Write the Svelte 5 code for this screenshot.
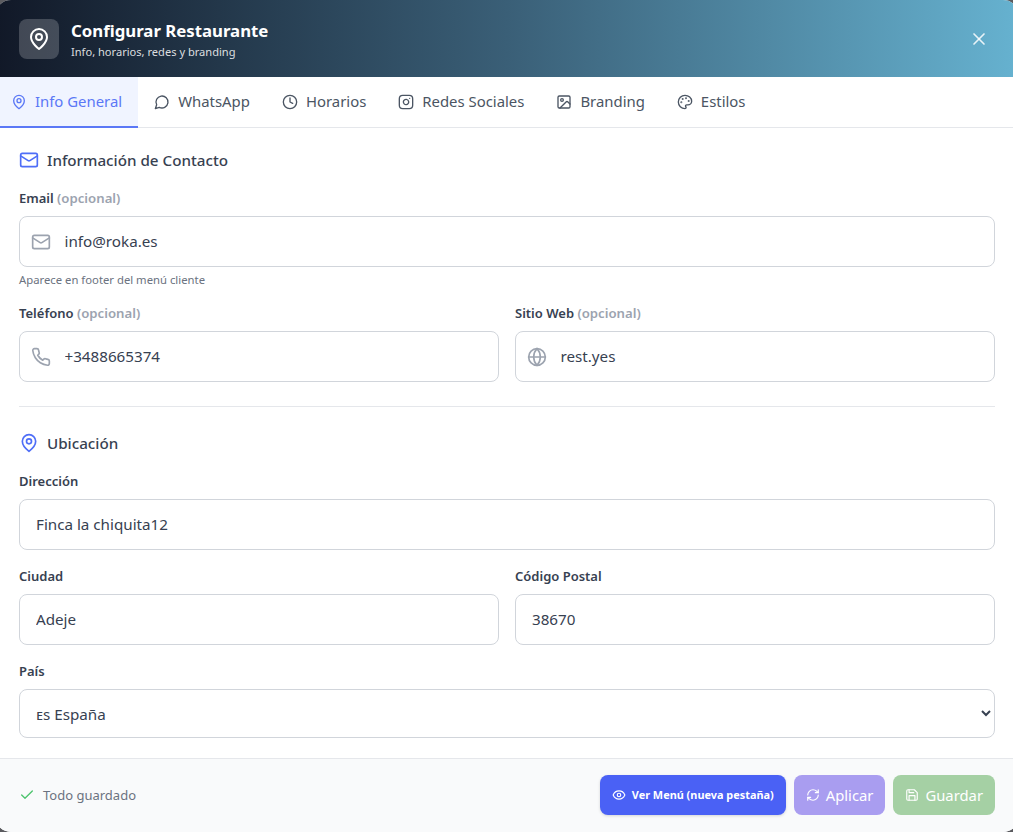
<script>
  const icons = {
    pin: '<path d="M20 10c0 6-8 12-8 12s-8-6-8-12a8 8 0 0 1 16 0Z"/><circle cx="12" cy="10" r="3"/>',
    chat: '<path d="M7.9 20A9 9 0 1 0 4 16.1L2 22Z"/>',
    clock: '<circle cx="12" cy="12" r="10"/><polyline points="12 6 12 12 16 14"/>',
    insta: '<rect x="2" y="2" width="20" height="20" rx="5"/><path d="M16 11.37A4 4 0 1 1 12.63 8 4 4 0 0 1 16 11.37z"/><line x1="17.5" y1="6.5" x2="17.51" y2="6.5"/>',
    image: '<rect x="3" y="3" width="18" height="18" rx="2"/><circle cx="9" cy="9" r="2"/><path d="m21 15-3.086-3.086a2 2 0 0 0-2.828 0L6 21"/>',
    palette: '<circle cx="13.5" cy="6.5" r=".5" fill="currentColor"/><circle cx="17.5" cy="10.5" r=".5" fill="currentColor"/><circle cx="8.5" cy="7.5" r=".5" fill="currentColor"/><circle cx="6.5" cy="12.5" r=".5" fill="currentColor"/><path d="M12 2C6.5 2 2 6.5 2 12s4.5 10 10 10c.926 0 1.648-.746 1.648-1.688 0-.437-.18-.835-.437-1.125-.29-.289-.438-.652-.438-1.125a1.64 1.64 0 0 1 1.668-1.668h1.996c3.051 0 5.555-2.503 5.555-5.554C21.965 6.012 17.461 2 12 2z"/>',
    mail: '<rect x="2" y="4" width="20" height="16" rx="2"/><path d="m22 7-8.97 5.7a1.94 1.94 0 0 1-2.06 0L2 7"/>',
    phone: '<path d="M22 16.92v3a2 2 0 0 1-2.18 2 19.79 19.79 0 0 1-8.63-3.07 19.5 19.5 0 0 1-6-6 19.79 19.79 0 0 1-3.07-8.67A2 2 0 0 1 4.11 2h3a2 2 0 0 1 2 1.72 12.84 12.84 0 0 0 .7 2.81 2 2 0 0 1-.45 2.11L8.09 9.91a16 16 0 0 0 6 6l1.27-1.27a2 2 0 0 1 2.11-.45 12.84 12.84 0 0 0 2.81.7A2 2 0 0 1 22 16.92z"/>',
    globe: '<circle cx="12" cy="12" r="10"/><path d="M12 2a14.5 14.5 0 0 0 0 20 14.5 14.5 0 0 0 0-20"/><path d="M2 12h20"/>',
    x: '<path d="M18 6 6 18"/><path d="m6 6 12 12"/>',
    check: '<path d="M20 6 9 17l-5-5"/>',
    eye: '<path d="M2 12s3-7 10-7 10 7 10 7-3 7-10 7-10-7-10-7Z"/><circle cx="12" cy="12" r="3"/>',
    refresh: '<path d="M3 12a9 9 0 0 1 9-9 9.75 9.75 0 0 1 6.74 2.74L21 8"/><path d="M21 3v5h-5"/><path d="M21 12a9 9 0 0 1-9 9 9.75 9.75 0 0 1-6.74-2.74L3 16"/><path d="M8 16H3v5"/>',
    save: '<path d="M19 21H5a2 2 0 0 1-2-2V5a2 2 0 0 1 2-2h11l5 5v11a2 2 0 0 1-2 2z"/><polyline points="17 21 17 13 7 13 7 21"/><polyline points="7 3 7 8 15 8"/>'
  };

  const tabs = [
    { name: 'Info General', icon: 'pin' },
    { name: 'WhatsApp', icon: 'chat' },
    { name: 'Horarios', icon: 'clock' },
    { name: 'Redes Sociales', icon: 'insta' },
    { name: 'Branding', icon: 'image' },
    { name: 'Estilos', icon: 'palette' }
  ];

  let active = $state('Info General');
  let email = $state('info@roka.es');
  let phone = $state('+3488665374');
  let web = $state('rest.yes');
  let address = $state('Finca la chiquita12');
  let city = $state('Adeje');
  let postal = $state('38670');
</script>

{#snippet icon(name, size, cls = '')}
  <svg class={cls} width={size} height={size} viewBox="0 0 24 24" fill="none" stroke="currentColor" stroke-width="2" stroke-linecap="round" stroke-linejoin="round">{@html icons[name]}</svg>
{/snippet}

<div class="page">
  <div class="modal">
    <header class="head">
      <div class="head-left">
        <div class="head-icon">{@render icon('pin', 24)}</div>
        <div>
          <h2>Configurar Restaurante</h2>
          <p>Info, horarios, redes y branding</p>
        </div>
      </div>
      <button class="close" aria-label="Cerrar">{@render icon('x', 20)}</button>
    </header>

    <nav class="tabs">
      {#each tabs as t}
        <button class="tab" class:on={active === t.name} onclick={() => (active = t.name)}>
          {@render icon(t.icon, 16)}
          <span>{t.name}</span>
        </button>
      {/each}
    </nav>

    <main class="body">
      <h3>{@render icon('mail', 20, 'blue')} Información de Contacto</h3>

      <div class="field">
        <label for="email">Email <span>(opcional)</span></label>
        <div class="with-icon">
          {@render icon('mail', 20, 'inner')}
          <input id="email" bind:value={email} />
        </div>
        <small>Aparece en footer del menú cliente</small>
      </div>

      <div class="cols">
        <div class="field">
          <label for="phone">Teléfono <span>(opcional)</span></label>
          <div class="with-icon">
            {@render icon('phone', 20, 'inner')}
            <input id="phone" bind:value={phone} />
          </div>
        </div>
        <div class="field">
          <label for="web">Sitio Web <span>(opcional)</span></label>
          <div class="with-icon">
            {@render icon('globe', 20, 'inner')}
            <input id="web" bind:value={web} />
          </div>
        </div>
      </div>

      <hr />

      <h3>{@render icon('pin', 20, 'blue')} Ubicación</h3>

      <div class="field">
        <label for="address">Dirección</label>
        <input id="address" bind:value={address} />
      </div>

      <div class="cols">
        <div class="field">
          <label for="city">Ciudad</label>
          <input id="city" bind:value={city} />
        </div>
        <div class="field">
          <label for="postal">Código Postal</label>
          <input id="postal" bind:value={postal} />
        </div>
      </div>

      <div class="field last">
        <label for="country">País</label>
        <select id="country">
          <option>ᴇs España</option>
          <option>ᴘᴛ Portugal</option>
        </select>
      </div>
    </main>

    <footer class="foot">
      <div class="status">{@render icon('check', 16, 'ok')} Todo guardado</div>
      <div class="actions">
        <button class="btn view">{@render icon('eye', 14)} Ver Menú (nueva pestaña)</button>
        <button class="btn apply">{@render icon('refresh', 14)} Aplicar</button>
        <button class="btn keep">{@render icon('save', 14)} Guardar</button>
      </div>
    </footer>
  </div>
</div>

<style>
  :global(body) {
    background: #5b5b5f;
    font-family: "Noto Sans", "Open Sans", sans-serif;
  }

  /* the dialog is wider than the window, both sides get cropped */
  .page {
    height: 832px;
    overflow: hidden;
  }

  .modal {
    width: 1024px;
    height: 831.5px;
    margin-left: -5px;
    display: flex;
    flex-direction: column;
    background: #fff;
    border-radius: 16px;
    overflow: hidden;
  }

  .head {
    height: 77px;
    flex: none;
    display: flex;
    align-items: center;
    justify-content: space-between;
    padding: 0 30px 0 24px;
    box-sizing: border-box;
    background: linear-gradient(90deg, #111827 0%, #3a5f77 50%, #66b2d0 100%);
    color: #fff;
  }

  .head-left {
    display: flex;
    align-items: center;
    gap: 12px;
  }

  .head-icon {
    width: 40px;
    height: 40px;
    border-radius: 8px;
    background: rgba(255, 255, 255, 0.2);
    display: flex;
    align-items: center;
    justify-content: center;
  }

  h2 {
    margin: 0;
    font-size: 16.8px;
    line-height: 24px;
    font-weight: 700;
  }

  .head p {
    margin: 1px 0 -1px;
    font-size: 11.1px;
    line-height: 16px;
    color: rgba(255, 255, 255, 0.85);
  }

  .close {
    border: none;
    background: none;
    padding: 0;
    display: flex;
    color: rgba(255, 255, 255, 0.85);
    cursor: pointer;
  }

  .tabs {
    height: 51px;
    flex: none;
    display: flex;
    box-sizing: border-box;
    border-bottom: 1px solid #e5e7eb;
  }

  .tab {
    display: flex;
    align-items: center;
    gap: 8px;
    padding: 0 16px;
    margin-bottom: -1px;
    border: none;
    border-bottom: 2px solid transparent;
    background: none;
    font: inherit;
    font-size: 14.9px;
    color: #4b5563;
    cursor: pointer;
  }

  .tab span {
    position: relative;
    top: -1px;
  }

  .tab.on {
    color: #5b78f6;
    background: #f0f4ff;
    border-bottom-color: #5b78f6;
  }

  .body {
    flex: 1;
    min-height: 0;
    padding: 20px 24px;
  }

  h3 {
    display: flex;
    align-items: center;
    gap: 8px;
    height: 24px;
    margin: 0 0 16px;
    font-size: 15.2px;
    font-weight: 500;
    color: #374151;
  }

  .field {
    margin-bottom: 16px;
    min-width: 0;
  }

  .field.last {
    margin-bottom: 0;
  }

  label {
    display: block;
    height: 20px;
    line-height: 20px;
    margin-bottom: 8px;
    font-size: 13px;
    font-weight: 600;
    color: #374151;
  }

  label span {
    color: #9ca3af;
    font-size: 13.2px;
  }

  input,
  select {
    display: block;
    width: 100%;
    height: 51px;
    box-sizing: border-box;
    padding: 0 16px 2px;
    border: 1px solid #d1d5db;
    border-radius: 8px;
    background: #fff;
    font: inherit;
    font-size: 15.2px;
    color: #374151;
    outline: none;
  }

  select {
    height: 49px;
    padding: 0 12px;
  }

  .with-icon {
    position: relative;
  }

  .with-icon input {
    padding-left: 44.5px;
  }

  .with-icon :global(.inner) {
    position: absolute;
    left: 12px;
    top: 16px;
    color: #9ca3af;
  }

  :global(.blue) {
    color: #4f6ef7;
  }

  small {
    display: block;
    margin-top: 5px;
    margin-bottom: -1px;
    font-size: 11.3px;
    line-height: 16px;
    color: #6b7280;
  }

  .cols {
    display: grid;
    grid-template-columns: 1fr 1fr;
    gap: 16px;
  }

  .cols .field {
    margin-bottom: 0;
  }

  .cols + .field {
    margin-top: 16px;
  }

  hr {
    border: none;
    border-top: 1px solid #e5e7eb;
    margin: 24px 0;
  }

  .foot {
    height: 73.5px;
    flex: none;
    box-sizing: border-box;
    display: flex;
    align-items: center;
    justify-content: space-between;
    padding: 0 24px 0.5px;
    background: #f9fafb;
    border-top: 1px solid #e5e7eb;
  }

  .status {
    display: flex;
    align-items: center;
    gap: 8px;
    font-size: 13px;
    color: #6b7280;
  }

  :global(.ok) {
    color: #4ec46e;
  }

  .actions {
    display: flex;
    gap: 8px;
  }

  .btn {
    height: 40px;
    display: flex;
    align-items: center;
    gap: 6px;
    padding: 0 12px 1px;
    border: none;
    border-radius: 8px;
    font: inherit;
    font-size: 14.8px;
    color: #fff;
    cursor: pointer;
  }

  .view {
    background: #4a61f5;
    font-size: 10.9px;
    font-weight: 700;
    box-shadow: 0 1px 3px rgba(0, 0, 0, 0.15);
  }

  .apply {
    background: #a99df0;
  }

  .keep {
    background: #a5d0a4;
  }
</style>
